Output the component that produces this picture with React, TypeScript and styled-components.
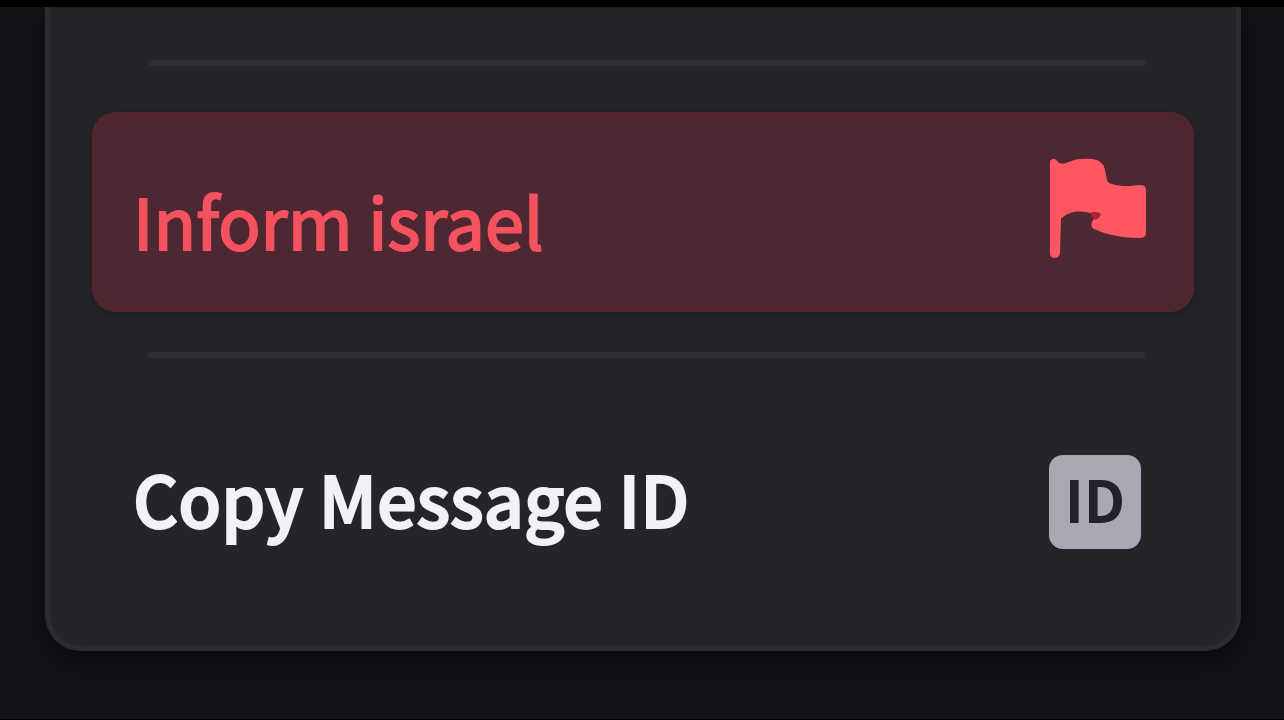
import React from "react";
import styled, { createGlobalStyle } from "styled-components";

const GlobalStyle = createGlobalStyle`
  *, *::before, *::after { box-sizing: border-box; }
  body { margin: 0; background: #131317; }
`;

const Screen = styled.main`
  min-height: 100vh;
  padding: 0 43px 68px 45px;
  border-top: 7px solid #000;
  border-bottom: 2px solid #000;
  background: #131317;
  overflow: hidden;
  font-family: "Noto Sans CJK SC", "Noto Sans", sans-serif;
`;

const Menu = styled.div`
  padding: 53px 42px 44px;
  border: 5px solid #2c2b33;
  border-top: 0;
  border-radius: 0 0 36px 36px;
  background: #242529;
  box-shadow: 0 12px 28px 2px #0b0a12;
`;

const Separator = styled.hr`
  height: 6px;
  margin: 0 48px 0 56px;
  border: 0;
  border-radius: 3px;
  background: #2e2d36;
`;

const MenuItem = styled.button<{ $danger?: boolean }>`
  display: flex;
  align-items: center;
  justify-content: space-between;
  width: 100%;
  height: 200px;
  margin: ${(p) => (p.$danger ? "46px 0 40px" : "44px 0 0")};
  padding: 0 48px 0 41px;
  border: 0;
  border-radius: 24px;
  background: ${(p) => (p.$danger ? "#4d2731" : "transparent")};
  box-shadow: ${(p) => (p.$danger ? "inset 0 0 8px #5c2431, 0 2px 8px #211b20" : "none")};
  color: ${(p) => (p.$danger ? "#f4525e" : "#f1f1f8")};
  font-family: inherit;
  font-size: 70px;
  line-height: 100px;
  text-align: left;
  cursor: pointer;
`;

const Label = styled.span<{ $danger?: boolean }>`
  padding: ${(p) => (p.$danger ? "16px 0 0" : "0 0 8px")};
  font-weight: ${(p) => (p.$danger ? 400 : 500)};
  -webkit-text-stroke: 2px currentColor;
  white-space: nowrap;
`;

const FlagIcon = styled.svg`
  display: block;
  flex: none;
  width: 100px;
  height: 104px;
  margin-bottom: 8px;
`;

const IdBadge = styled.span`
  display: flex;
  align-items: center;
  justify-content: center;
  flex: none;
  width: 92px;
  height: 94px;
  margin-right: 5px;
  padding-bottom: 8px;
  border-radius: 14px;
  background: #a9a8b2;
  color: #22222c;
  font-size: 58px;
  font-weight: 700;
  line-height: 60px;
`;

export default function App() {
  return (
    <>
      <GlobalStyle />
      <Screen>
        <Menu role="menu">
          <Separator />
          <MenuItem type="button" role="menuitem" $danger>
            <Label $danger>Inform israel</Label>
            <FlagIcon viewBox="0 0 100 104" aria-hidden="true">
              <path
                fill="#ff5661"
                d="M4 5 Q8 0 12 6 Q15 9 20 7 C28 3 36 2 46 3 Q57 4 59 14 L61 24 Q62 27 66 28 C76 31 84 30 94 29 Q100 29 100 34 V76 Q100 82 94 82 C77 82 61 79 48 73 Q44 71 46 66 L49 59 C36 53 22 55 15 63 L14 97 Q13 102 9 102 Q4 102 4 97 Z"
              />
              <path fill="#a52736" d="M44 57 Q50 54 55 58 Q54 63 48 64 Z" />
            </FlagIcon>
          </MenuItem>
          <Separator />
          <MenuItem type="button" role="menuitem">
            <Label>Copy Message ID</Label>
            <IdBadge aria-hidden="true">ID</IdBadge>
          </MenuItem>
        </Menu>
      </Screen>
    </>
  );
}
